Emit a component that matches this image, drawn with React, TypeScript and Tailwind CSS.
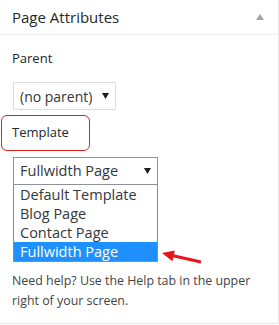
import React from 'react';

const templates = ['Default Template', 'Blog Page', 'Contact Page', 'Fullwidth Page'];

function Caret() {
    return (
        <svg width="7" height="6" viewBox="0 0 7 6" className="shrink-0">
            <path d="M0 0 H7 L3.5 6 Z" fill="#1e1e1e" />
        </svg>
    );
}

export default function App() {
    return (
        <div className="relative w-[279px] h-[325px] bg-white font-['Open_Sans',sans-serif]">
            <div className="w-[279px] h-[324px] border-r border-b border-[#e5e5e5] flex flex-col">
                {/* header */}
                <div className="h-[35px] shrink-0 border-b border-[#eeeeee] flex items-center justify-between pl-3 pr-[14px]">
                    <span className="text-[15px] text-[#23282d] leading-none">Page Attributes</span>
                    <svg width="8" height="6" viewBox="0 0 8 6">
                        <path d="M0 6 L4 0 L8 6 Z" fill="#a0a5aa" />
                    </svg>
                </div>

                <div className="flex flex-col px-3">
                    <p className="mt-[13px] text-[13px] leading-[20px] font-medium text-[#23282d]">Parent</p>

                    <div className="mt-[14px] ml-px w-[103px] h-[28px] border border-[#dddddd] flex items-center justify-between pl-[6px] pr-[6px]">
                        <span className="text-[14px] text-[#32373c]">(no parent)</span>
                        <Caret />
                    </div>

                    <div className="mt-[5px] -ml-[11px] w-[89px] h-[36px] border border-[#e41e1e] rounded-[6px] flex items-center pl-[10px]">
                        <span className="text-[13px] font-medium text-[#23282d]">Template</span>
                    </div>

                    <div className="mt-[6px] ml-px w-[145px] flex flex-col">
                        <div className="h-[28px] border border-[#8c9299] flex items-center justify-between pl-[6px] pr-[6px]">
                            <span className="text-[14.5px] text-[#32373c]">Fullwidth Page</span>
                            <Caret />
                        </div>
                        <div className="border-x border-b border-[#7f8fa3] flex flex-col">
                            {templates.map((t) => {
                                const active = t === 'Fullwidth Page';
                                return (
                                    <div
                                        key={t}
                                        className={`h-[19px] flex items-center pl-[6px] text-[14.5px] ${active ? 'bg-[#1e90ff] text-white' : 'text-[#32373c]'}`}
                                    >
                                        {t}
                                    </div>
                                );
                            })}
                        </div>
                    </div>

                    <p className="mt-[9px] text-[12.4px] leading-[20px] text-[#444444]">
                        Need help? Use the Help tab in the upper right of your screen.
                    </p>
                </div>
            </div>

            {/* annotation arrow */}
            <svg className="absolute left-[160px] top-[245px]" width="44" height="20" viewBox="0 0 44 20">
                <line x1="12" y1="10.5" x2="41" y2="17" stroke="#e8141b" strokeWidth="3" />
                <path d="M2 8 L14.8 5.4 L12.4 16.2 Z" fill="#e8141b" />
            </svg>
        </div>
    );
}
